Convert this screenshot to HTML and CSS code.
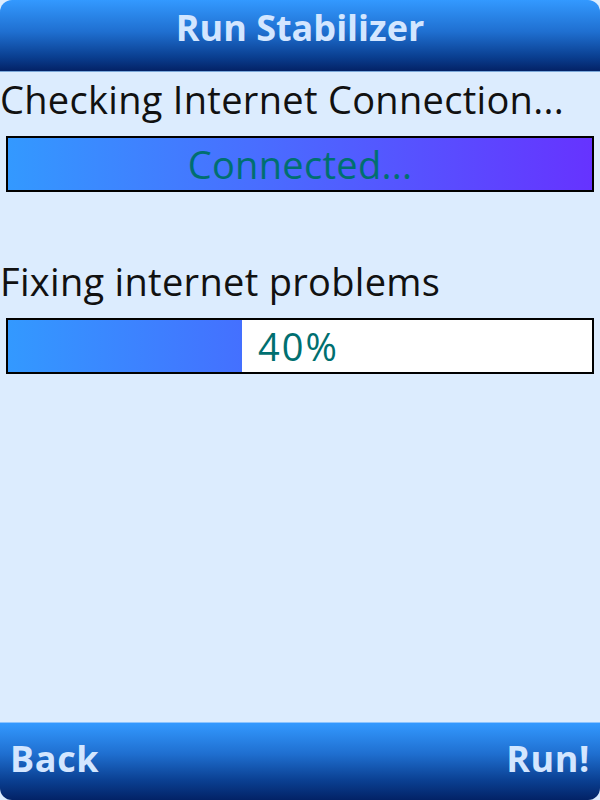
FILE: index.html
```html
<!DOCTYPE html>
<html lang="en">
<head>
  <meta charset="UTF-8" />
  <title>Run Stabilizer</title>
  <link rel="stylesheet" href="styles.css">
</head>
<body>
  <div class="screen">
    <header class="title-bar">Run Stabilizer</header>

    <main class="content">
      <div class="step">
        <div class="label">Checking Internet Connection...</div>
        <div class="progress">
          <div class="fill full"></div>
          <span class="progress-text center">Connected...</span>
        </div>
      </div>

      <div class="step">
        <div class="label">Fixing internet problems</div>
        <div class="progress">
          <div class="fill partial" style="width: 40%"></div>
          <span class="progress-text">40%</span>
        </div>
      </div>
    </main>

    <footer class="soft-keys">
      <span>Back</span>
      <span>Run!</span>
    </footer>
  </div>
</body>
</html>
```

FILE: styles.css
```css
html, body {
  margin: 0;
  padding: 0;
  background: #000;
}

.screen {
  width: 600px;
  height: 800px;
  display: flex;
  flex-direction: column;
  background-color: #dcecfe;
  font-family: "Open Sans", "DejaVu Sans", sans-serif;
  overflow: hidden;
}

.title-bar {
  height: 72px;
  border-radius: 12px 12px 0 0;
  background: linear-gradient(#3399ff, #1f6fd0 45%, #0a3f91 80%, #032266);
  border-bottom: 1px solid #7aa7d9;
  color: #d3e6ff;
  font-weight: bold;
  font-size: 36px;
  text-align: center;
  line-height: 56px;
  box-sizing: border-box;
}

.content {
  flex: 1;
  padding-top: 2px;
}

.step {
  margin-bottom: 64px;
}

.label {
  font-size: 38px;
  color: #111;
  line-height: 50px;
  letter-spacing: 0.3px;
  white-space: nowrap;
}

.progress {
  position: relative;
  margin: 12px 6px 0;
  height: 56px;
  box-sizing: border-box;
  border: 2px solid #000;
  background: #fff;
  display: flex;
  align-items: center;
}

.fill {
  position: absolute;
  top: 0;
  left: 0;
  bottom: 0;
}

.fill.full {
  right: 0;
  background: linear-gradient(to right, #3399ff, #6633ff);
}

.fill.partial {
  background: linear-gradient(to right, #3399ff, #4470ff);
}

.progress-text {
  position: relative;
  font-size: 38px;
  line-height: 50px;
  color: #006f70;
  padding-left: 250px;
  letter-spacing: 2px;
}

.progress-text.center {
  padding-left: 0;
  width: 100%;
  text-align: center;
  letter-spacing: 0.3px;
}

.soft-keys {
  height: 78px;
  border-radius: 0 0 12px 12px;
  border-top: 1px solid #8cc4ff;
  background: linear-gradient(#3399ff, #1f6fd0 40%, #0a3f91 75%, #032266);
  display: flex;
  justify-content: space-between;
  padding: 8px 10px 0 10px;
  box-sizing: border-box;
  color: #d3e6ff;
  font-weight: bold;
  font-size: 36px;
  line-height: 56px;
  letter-spacing: 0.6px;
}
```
